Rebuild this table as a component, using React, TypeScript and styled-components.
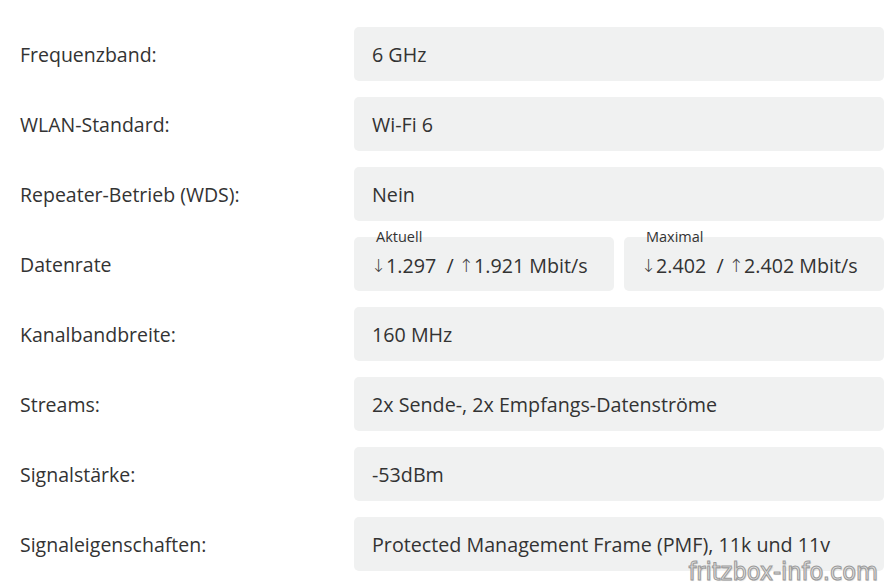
import React from "react";
import styled, { createGlobalStyle } from "styled-components";

const Global = createGlobalStyle`
  html, body { margin: 0; padding: 0; background: #ffffff; }
  body { font-family: "Open Sans", "Lato", sans-serif; color: #333333; }
`;

const Page = styled.div`
  position: relative;
  width: 889px;
  height: 585px;
  overflow: hidden;
  box-sizing: border-box;
  padding: 27px 5px 0 20px;
`;

const Table = styled.div`
  display: grid;
  grid-template-columns: 334px 1fr;
  row-gap: 16px;
`;

const Label = styled.div`
  display: flex;
  align-items: center;
  height: 54px;
  font-size: 19.5px;
  color: #333333;
  white-space: nowrap;
`;

const ValueBox = styled.div`
  display: flex;
  align-items: center;
  height: 54px;
  box-sizing: border-box;
  padding: 0 18px;
  background: #f0f1f1;
  border-radius: 5px;
  font-size: 19.7px;
  color: #333333;
  white-space: pre;
`;

const Pair = styled.div`
  display: grid;
  grid-template-columns: 1fr 1fr;
  column-gap: 10px;
`;

const SubBox = styled(ValueBox)`
  position: relative;
  padding-top: 2px;
  padding-left: 17px;
`;

const Caption = styled.span`
  position: absolute;
  top: -8px;
  left: 22px;
  font-size: 14.5px;
  line-height: 16px;
  color: #333333;
`;

const Arrow = styled.span`
  font-family: "DejaVu Sans", sans-serif;
  font-size: 18px;
  font-weight: 300;
  color: #444444;
`;

const Watermark = styled.div`
  position: absolute;
  right: 11px;
  bottom: 1px;
  font-family: "DejaVu Sans", sans-serif;
  font-stretch: condensed;
  font-size: 25px;
  line-height: 25px;
  color: #e2e2e2;
  -webkit-text-stroke: 1px #9a9a9a;
  text-shadow: 1px 1px 1px rgba(0, 0, 0, 0.15);
`;

type Rate = { caption: string; down: string; up: string };

const rows: { label: string; value?: string; rates?: Rate[] }[] = [
  { label: "Frequenzband:", value: "6 GHz" },
  { label: "WLAN-Standard:", value: "Wi-Fi 6" },
  { label: "Repeater-Betrieb (WDS):", value: "Nein" },
  {
    label: "Datenrate",
    rates: [
      { caption: "Aktuell", down: "1.297", up: "1.921" },
      { caption: "Maximal", down: "2.402", up: "2.402" },
    ],
  },
  { label: "Kanalbandbreite:", value: "160 MHz" },
  { label: "Streams:", value: "2x Sende-, 2x Empfangs-Datenströme" },
  { label: "Signalstärke:", value: "-53dBm" },
  {
    label: "Signaleigenschaften:",
    value: "Protected Management Frame (PMF), 11k und 11v",
  },
];

export default function App() {
  return (
    <>
      <Global />
      <Page>
        <Table>
          {rows.map((r) => (
            <React.Fragment key={r.label}>
              <Label>{r.label}</Label>
              {r.rates ? (
                <Pair>
                  {r.rates.map((rt) => (
                    <SubBox key={rt.caption}>
                      <Caption>{rt.caption}</Caption>
                      <Arrow>↓</Arrow>
                      {rt.down + "  / "}
                      <Arrow>↑</Arrow>
                      {rt.up + " Mbit/s"}
                    </SubBox>
                  ))}
                </Pair>
              ) : (
                <ValueBox>{r.value}</ValueBox>
              )}
            </React.Fragment>
          ))}
        </Table>
        <Watermark>fritzbox-info.com</Watermark>
      </Page>
    </>
  );
}
